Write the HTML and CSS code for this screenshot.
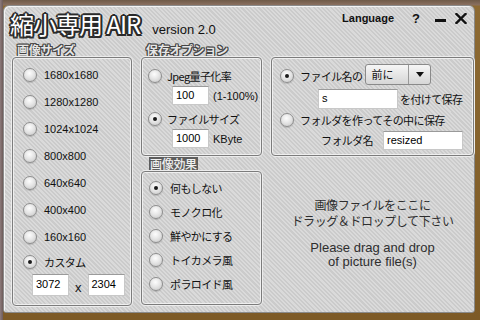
FILE: index.html
```html
<!DOCTYPE html>
<html lang="ja">
<head>
<meta charset="utf-8">
<title>縮小専用 AIR</title>
<link rel="stylesheet" href="styles.css">
</head>
<body>
<div class="window">
  <header class="titlebar">
    <div class="brand">
      <span class="app-title">縮小専用 AIR</span>
      <span class="version">version 2.0</span>
    </div>
    <div class="controls">
      <span class="lang">Language</span>
      <span class="help">?</span>
      <span class="minimize"></span>
      <svg class="close" width="12" height="11" viewBox="0 0 12 11"><path d="M1.5 1 L10.5 10 M10.5 1 L1.5 10" stroke="#111" stroke-width="2.4" stroke-linecap="square"/></svg>
    </div>
  </header>

  <main class="content">
    <section class="col">
      <h2 class="group-title">画像サイズ</h2>
      <div class="group group-size">
        <div class="row size-row"><span class="radio"></span><span class="num">1680x1680</span></div>
        <div class="row size-row"><span class="radio"></span><span class="num">1280x1280</span></div>
        <div class="row size-row"><span class="radio"></span><span class="num">1024x1024</span></div>
        <div class="row size-row"><span class="radio"></span><span class="num">800x800</span></div>
        <div class="row size-row"><span class="radio"></span><span class="num">640x640</span></div>
        <div class="row size-row"><span class="radio"></span><span class="num">400x400</span></div>
        <div class="row size-row"><span class="radio"></span><span class="num">160x160</span></div>
        <div class="row size-row last"><span class="radio checked"></span><span class="jp">カスタム</span></div>
        <div class="custom-row">
          <span class="field w37">3072</span>
          <span class="times">x</span>
          <span class="field w37">2304</span>
        </div>
      </div>
    </section>

    <section class="col">
      <h2 class="group-title">保存オプション</h2>
      <div class="group group-save">
        <div class="row opt-row"><span class="radio"></span><span class="jp">Jpeg量子化率</span></div>
        <div class="field-row"><span class="field w37">100</span><span class="num">(1-100%)</span></div>
        <div class="row opt-row"><span class="radio checked"></span><span class="jp">ファイルサイズ</span></div>
        <div class="field-row"><span class="field w37">1000</span><span class="num">KByte</span></div>
      </div>
      <h2 class="group-title dark">画像効果</h2>
      <div class="group group-effect">
        <div class="row effect-row"><span class="radio checked"></span><span class="jp">何もしない</span></div>
        <div class="row effect-row"><span class="radio"></span><span class="jp">モノクロ化</span></div>
        <div class="row effect-row"><span class="radio"></span><span class="jp">鮮やかにする</span></div>
        <div class="row effect-row"><span class="radio"></span><span class="jp">トイカメラ風</span></div>
        <div class="row effect-row"><span class="radio"></span><span class="jp">ポラロイド風</span></div>
      </div>
    </section>

    <section class="col col-right">
      <div class="group group-name">
        <div class="row name-row">
          <span class="radio checked"></span><span class="jp">ファイル名の</span>
          <span class="select"><span class="select-text">前に</span><span class="select-arrow"></span></span>
        </div>
        <div class="indent-row"><span class="field w80">s</span><span class="jp">を付けて保存</span></div>
        <div class="row folder-row"><span class="radio"></span><span class="jp">フォルダを作ってその中に保存</span></div>
        <div class="folder-name-row"><span class="jp">フォルダ名</span><span class="field w80">resized</span></div>
      </div>
      <div class="drop-zone">
        <p class="drop-jp">画像ファイルをここに<br>ドラッグ＆ドロップして下さい</p>
        <p class="drop-en">Please drag and drop<br>of picture file(s)</p>
      </div>
    </section>
  </main>
</div>
</body>
</html>
```

FILE: styles.css
```css
* { box-sizing: border-box; }

html, body { margin: 0; padding: 0; }

body {
  width: 480px;
  height: 320px;
  overflow: hidden;
  padding: 5px 4px 7px 3px;
  background:
    linear-gradient(90deg, #8d7b7b 0, #6e5c5a 3px, transparent 3px),
    linear-gradient(180deg, #6f5a48 0, #8a7060 5px, #8d6a33 6px, #7d5a26 100%);
  font-family: "Liberation Sans", Arial, sans-serif;
  color: #111;
}

.window {
  width: 472px;
  height: 308px;
  border: 1px solid #8a8a8a;
  border-radius: 6px 6px 3px 3px;
  background: repeating-linear-gradient(45deg, #dadada 0 1.5px, #cbcbcb 1.5px 3px);
  box-shadow: inset 1px 1px 0 #f4f4f4;
  display: flex;
  flex-direction: column;
}

/* ---------- title bar ---------- */
.titlebar {
  height: 37px;
  display: flex;
  justify-content: space-between;
  align-items: flex-start;
  padding: 0 7px 0 6px;
}

.brand {
  display: flex;
  align-items: baseline;
  gap: 12px;
  padding-top: 4px;
}

.app-title {
  font-family: "Noto Sans CJK JP", sans-serif;
  font-size: 24px;
  font-weight: 400;
  line-height: 28px;
  color: #fff;
  letter-spacing: -1px;
  text-shadow:
    -1.5px -1.5px 0 #2a2a2a, 1.5px -1.5px 0 #2a2a2a, -1.5px 1.5px 0 #2a2a2a, 1.5px 1.5px 0 #2a2a2a,
    0 -2px 0 #2a2a2a, 0 2px 0 #2a2a2a, -2px 0 0 #2a2a2a, 2px 0 0 #2a2a2a,
    0 0 4px #eee, 0 0 5px #fff;
}

.version {
  font-family: "Liberation Sans", Arial, sans-serif;
  font-size: 13px;
  color: #111;
}

.controls {
  display: flex;
  align-items: center;
  height: 16px;
  margin-top: 4px;
}

.lang {
  font-size: 11px;
  font-weight: bold;
  margin-right: 18px;
}

.help {
  font-size: 13px;
  font-weight: bold;
  margin-right: 15px;
}

.minimize {
  width: 11px;
  height: 3px;
  background: #111;
  margin-top: 5px;
  margin-right: 9px;
}

.close { display: block; }

/* ---------- content ---------- */
.content {
  display: grid;
  grid-template-columns: 120px 121px 203px;
  column-gap: 9px;
  padding-left: 8px;
}

.col {
  display: flex;
  flex-direction: column;
}

.group-title {
  margin: 0;
  height: 14px;
  padding-left: 5px;
  font-family: "Noto Sans CJK JP", sans-serif;
  font-size: 12px;
  font-weight: 700;
  line-height: 14px;
  color: #e6e6e6;
  letter-spacing: -0.3px;
  text-shadow:
    -1px -1px 0 #444, 1px -1px 0 #444, -1px 1px 0 #444, 1px 1px 0 #444,
    0 -1px 0 #444, 0 1px 0 #444, -1px 0 0 #444, 1px 0 0 #444;
}

.group-title.dark {
  align-self: flex-start;
  margin: 1px 0 0 8px;
  padding: 0 1px;
  background: #5d5d5d;
  color: #f0f0f0;
  font-weight: 500;
  text-shadow: none;
}

.group {
  border: 1px solid #7c7c7c;
  border-radius: 4px;
  box-shadow: inset 0 0 0 1px #efefef, 0 0 0 1px #ececec;
}

.row {
  display: flex;
  align-items: center;
}

.radio {
  flex: none;
  width: 14px;
  height: 14px;
  border-radius: 50%;
  border: 1px solid #8e8e8e;
  background: radial-gradient(circle at 45% 35%, #fdfdfd 0, #e6e6e6 45%, #c4c4c4 100%);
  box-shadow: 0 1px 1px rgba(0,0,0,0.15);
  position: relative;
}

.radio.checked::after {
  content: "";
  position: absolute;
  left: 4px;
  top: 4px;
  width: 4px;
  height: 4px;
  border-radius: 50%;
  background: #1a1a1a;
}

.num {
  font-family: "Liberation Sans", Arial, sans-serif;
  font-size: 11px;
}

.jp {
  font-family: "Noto Sans CJK JP", sans-serif;
  font-size: 11px;
  letter-spacing: -0.6px;
  white-space: nowrap;
}

.field {
  display: block;
  flex: none;
  height: 19px;
  background: #fff;
  border: 1px solid #c8c8c8;
  border-top-color: #9a9a9a;
  font-family: "Liberation Sans", Arial, sans-serif;
  font-size: 11px;
  line-height: 14px;
  padding: 1px 3px;
  color: #000;
}

.w37 { width: 37px; }
.w80 { width: 80px; }

/* size group */
.group-size {
  height: 249px;
  padding: 3px 0 0 10px;
}

.size-row {
  height: 27px;
  gap: 7px;
}

.size-row.last { height: 24px; }

.custom-row {
  display: flex;
  align-items: center;
  gap: 5px;
  padding-left: 9px;
}

.custom-row .field { height: 22px; padding-top: 2px; }

.times {
  font-size: 13px;
  margin-top: 5px;
  padding: 0 1px;
}

/* save group */
.group-save {
  height: 99px;
  padding: 7px 0 0 6px;
}

.opt-row {
  height: 21px;
  gap: 5px;
}

.field-row {
  display: flex;
  align-items: center;
  gap: 4px;
  padding-left: 24px;
  margin-bottom: 3px;
}

.group-effect {
  height: 134px;
  padding: 4px 0 0 7px;
}

.effect-row {
  height: 24px;
  gap: 7px;
}

/* file name group */
.group-name {
  margin-top: 14px;
  height: 99px;
  padding: 6px 0 0 8px;
}

.name-row {
  height: 24px;
  gap: 6px;
}

.select {
  display: flex;
  align-items: center;
  width: 66px;
  height: 21px;
  margin-left: -3px;
  margin-top: -4px;
  border: 1px solid #8a8a8a;
  border-radius: 3px;
  background: linear-gradient(#f6f6f6, #d6d6d6);
}

.select-text {
  flex: 1;
  font-family: "Noto Sans CJK JP", sans-serif;
  font-size: 11px;
  padding-left: 5px;
  border-right: 1px solid #9a9a9a;
  height: 100%;
  line-height: 19px;
}

.select-arrow {
  width: 21px;
  display: flex;
  justify-content: center;
}

.select-arrow::before {
  content: "";
  border-left: 4px solid transparent;
  border-right: 4px solid transparent;
  border-top: 5px solid #111;
}

.indent-row {
  display: flex;
  align-items: center;
  gap: 2px;
  padding-left: 38px;
  height: 21px;
}

.indent-row .field { height: 20px; }

.folder-row {
  height: 21px;
  gap: 6px;
}

.folder-name-row {
  display: flex;
  align-items: center;
  gap: 10px;
  padding-left: 41px;
  height: 20px;
}

/* drop zone */
.drop-zone {
  flex: 1;
  height: 150px;
  display: flex;
  flex-direction: column;
  justify-content: center;
  align-items: center;
  text-align: center;
  color: #2e2e2e;
  padding-top: 4px;
}

.drop-zone p { margin: 0; }

.drop-jp {
  font-family: "Noto Sans CJK JP", sans-serif;
  font-size: 12px;
  line-height: 16px;
  letter-spacing: -0.4px;
  margin-bottom: 12px !important;
}

.drop-en {
  font-family: "Liberation Sans", Arial, sans-serif;
  font-size: 13px;
  line-height: 14px;
}
```
